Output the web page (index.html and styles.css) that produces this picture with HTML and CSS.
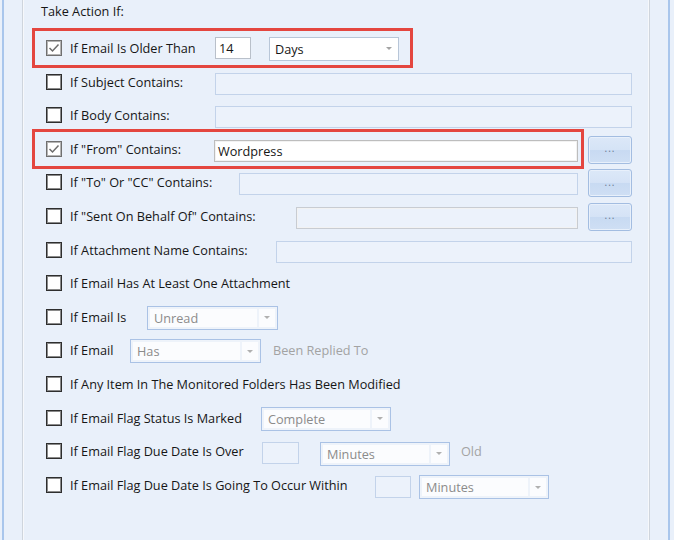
FILE: index.html
```html
<!DOCTYPE html>
<html>
<head>
<meta charset="utf-8">
<link rel="stylesheet" href="styles.css">
</head>
<body>
<div class="frame">
  <div class="group">
    <div class="title">Take Action If:</div>
    <div class="rows">

      <div class="row">
        <div class="cond hl hl-a">
          <span class="cb on"><svg viewBox="0 0 14 14" width="14" height="14"><polyline points="2.5,7 5.5,10 11.5,3.5" fill="none" stroke="#6d6d6d" stroke-width="1.5"/></svg></span>
          <span class="lbl w145">If Email Is Older Than</span>
          <span class="txt w36 first">14</span>
          <div class="dd g18"><span class="dd-val">Days</span><span class="dd-arrow"><svg viewBox="0 0 6 3" width="6" height="3"><polygon points="0,0 6,0 3,3" fill="#a3a3a3"/></svg></span></div>
        </div>
      </div>

      <div class="row">
        <div class="cond">
          <span class="cb"></span>
          <span class="lbl w145">If Subject Contains:</span>
          <span class="txt off w417"></span>
        </div>
      </div>

      <div class="row">
        <div class="cond">
          <span class="cb"></span>
          <span class="lbl w145">If Body Contains:</span>
          <span class="txt off w417"></span>
        </div>
      </div>

      <div class="row">
        <div class="cond hl hl-b">
          <span class="cb on"><svg viewBox="0 0 14 14" width="14" height="14"><polyline points="2.5,7 5.5,10 11.5,3.5" fill="none" stroke="#6d6d6d" stroke-width="1.5"/></svg></span>
          <span class="lbl w144">If "From" Contains:</span>
          <span class="txt w364 dark">Wordpress</span>
        </div>
        <button class="btn">...</button>
      </div>

      <div class="row">
        <div class="cond">
          <span class="cb"></span>
          <span class="lbl w169">If "To" Or "CC" Contains:</span>
          <span class="txt off w339"></span>
        </div>
        <button class="btn">...</button>
      </div>

      <div class="row">
        <div class="cond">
          <span class="cb"></span>
          <span class="lbl w226">If "Sent On Behalf Of" Contains:</span>
          <span class="txt off w282 dark"></span>
        </div>
        <button class="btn">...</button>
      </div>

      <div class="row">
        <div class="cond">
          <span class="cb"></span>
          <span class="lbl w206">If Attachment Name Contains:</span>
          <span class="txt off w356"></span>
        </div>
      </div>

      <div class="row">
        <div class="cond">
          <span class="cb"></span>
          <span class="lbl">If Email Has At Least One Attachment</span>
        </div>
      </div>

      <div class="row">
        <div class="cond">
          <span class="cb"></span>
          <span class="lbl w77">If Email Is</span>
          <div class="dd off w131"><span class="dd-val">Unread</span><span class="dd-arrow"><svg viewBox="0 0 6 3" width="6" height="3"><polygon points="0,0 6,0 3,3" fill="#b0b0b0"/></svg></span></div>
        </div>
      </div>

      <div class="row">
        <div class="cond">
          <span class="cb"></span>
          <span class="lbl w60">If Email</span>
          <div class="dd off w131"><span class="dd-val">Has</span><span class="dd-arrow"><svg viewBox="0 0 6 3" width="6" height="3"><polygon points="0,0 6,0 3,3" fill="#b0b0b0"/></svg></span></div>
          <span class="muted g12">Been Replied To</span>
        </div>
      </div>

      <div class="row">
        <div class="cond">
          <span class="cb"></span>
          <span class="lbl">If Any Item In The Monitored Folders Has Been Modified</span>
        </div>
      </div>

      <div class="row">
        <div class="cond">
          <span class="cb"></span>
          <span class="lbl w191">If Email Flag Status Is Marked</span>
          <div class="dd off"><span class="dd-val">Complete</span><span class="dd-arrow"><svg viewBox="0 0 6 3" width="6" height="3"><polygon points="0,0 6,0 3,3" fill="#b0b0b0"/></svg></span></div>
        </div>
      </div>

      <div class="row">
        <div class="cond">
          <span class="cb"></span>
          <span class="lbl w192">If Email Flag Due Date Is Over</span>
          <span class="txt off w37"></span>
          <div class="dd off low g21"><span class="dd-val">Minutes</span><span class="dd-arrow"><svg viewBox="0 0 6 3" width="6" height="3"><polygon points="0,0 6,0 3,3" fill="#b0b0b0"/></svg></span></div>
          <span class="muted g11">Old</span>
        </div>
      </div>

      <div class="row">
        <div class="cond">
          <span class="cb"></span>
          <span class="lbl w305">If Email Flag Due Date Is Going To Occur Within</span>
          <span class="txt off w36"></span>
          <div class="dd off low g8"><span class="dd-val">Minutes</span><span class="dd-arrow"><svg viewBox="0 0 6 3" width="6" height="3"><polygon points="0,0 6,0 3,3" fill="#b0b0b0"/></svg></span></div>
        </div>
      </div>

    </div>
  </div>
</div>
</body>
</html>
```

FILE: styles.css
```css
html, body {
  margin: 0;
  padding: 0;
  background: #e9f0fa;
}

body {
  font-family: "Open Sans", "Liberation Sans", sans-serif;
  font-size: 12.7px;
  color: #161616;
  width: 674px;
  height: 540px;
  overflow: hidden;
}

.frame {
  margin-left: 2px;
  width: 668px;
  height: 540px;
  box-sizing: border-box;
  border-left: 2px solid #a9c6ec;
  border-right: 2px solid #a9c6ec;
  padding: 0 18px;
  display: flex;
}

.group {
  flex: 1;
  border-left: 1px solid #cfd5dd;
  border-right: 1px solid #cfd5dd;
  box-shadow: inset 1px 0 0 #f6f8fb, inset -1px 0 0 #f6f8fb;
  padding-left: 1px;
  padding-right: 1px;
}

.title {
  padding: 3px 0 0 17px;
  line-height: 16px;
}

.rows {
  margin-top: 12.2px;
  padding-left: 22px;
  display: flex;
  flex-direction: column;
}

.row {
  height: 33.6px;
  display: flex;
  align-items: center;
}

.cond {
  height: 100%;
  display: flex;
  align-items: center;
}

.hl {
  outline: 3px solid #e4463f;
  padding-left: 11px;
  margin-left: -11px;
}

.hl-a {
  padding-right: 11px;
  margin-right: -11px;
}

.hl-b {
  padding-right: 3px;
  margin-right: -3px;
}

.cb {
  width: 16px;
  height: 16px;
  box-sizing: border-box;
  border: 1px solid #2e2e2e;
  box-shadow: inset 0 0 0 1px #8a8a8a;
  background: #fff;
  flex: none;
  display: flex;
  align-items: center;
  justify-content: center;
}

.cb.on {
  border-color: #707070;
  box-shadow: inset 0 0 0 1px #b5b5b5;
}

.lbl {
  margin-left: 8px;
  flex: none;
  white-space: nowrap;
  line-height: 16px;
}

.w144 { width: 144px; }
.w145 { width: 145px; }
.w169 { width: 169px; }
.w226 { width: 226px; }
.w206 { width: 206px; }
.w77 { width: 77px; }
.w60 { width: 60px; }
.w191 { width: 191px; }
.w192 { width: 192px; }
.w305 { width: 305px; }

.txt {
  height: 22px;
  box-sizing: border-box;
  border: 1px solid #b9c0ca;
  background: #fff;
  padding-left: 3px;
  line-height: 20px;
  flex: none;
  margin-top: 4px;
}

.txt.first {
  margin-top: 0;
}

.txt.dark {
  border-color: #bdbdbd;
  box-shadow: inset 0 0 0 1px #f2f2f2;
}

.txt.off {
  border-color: #c3d3ea;
  background: #ecf2fb;
}

.txt.off.dark {
  border-color: #c8ccd2;
}

.w36 { width: 36px; }
.w37 { width: 37px; }
.w417 { width: 417px; }
.w364 { width: 364px; }
.w339 { width: 339px; }
.w282 { width: 282px; }
.w356 { width: 356px; }

.dd {
  width: 130px;
  height: 24px;
  box-sizing: border-box;
  border: 1px solid #b8c6d8;
  background: #fff;
  display: flex;
  flex: none;
  margin-top: 2px;
}

.dd.w131 { width: 131px; }

.dd-val {
  flex: 1;
  padding-left: 5px;
  line-height: 22px;
  white-space: nowrap;
}

.dd-arrow {
  width: 18px;
  display: flex;
  align-items: center;
  justify-content: center;
}

.dd.off {
  border-color: #aac2e5;
  background: #eef3fa;
  padding: 2px;
}

.dd.off .dd-val {
  background: #fbfcfe;
  color: #8b8b8b;
  line-height: 18px;
  padding-left: 4px;
}

.dd.off .dd-arrow {
  background: #fbfcfe;
  margin-left: 2px;
  width: 16px;
}

.dd.low { margin-top: 5px; }

.g18 { margin-left: 18px; }
.g21 { margin-left: 21px; }
.g8 { margin-left: 8px; }
.g12 { margin-left: 12px; }
.g11 { margin-left: 11px; }

.muted {
  color: #a3a3a3;
  white-space: nowrap;
}

.btn {
  width: 44px;
  height: 28px;
  margin-left: 10px;
  margin-top: 2px;
  padding: 0 0 3px 0;
  box-sizing: border-box;
  border: 1px solid #a3bde1;
  border-radius: 3px;
  background: linear-gradient(#dce8f8 0%, #d5e3f6 48%, #c8daf2 52%, #cfdff4 100%);
  box-shadow: inset 0 0 0 1px #e8f0fb;
  color: #6a7a92;
  font-family: "Open Sans", sans-serif;
  font-size: 10px;
  letter-spacing: 1px;
  line-height: 10px;
  flex: none;
}
```
